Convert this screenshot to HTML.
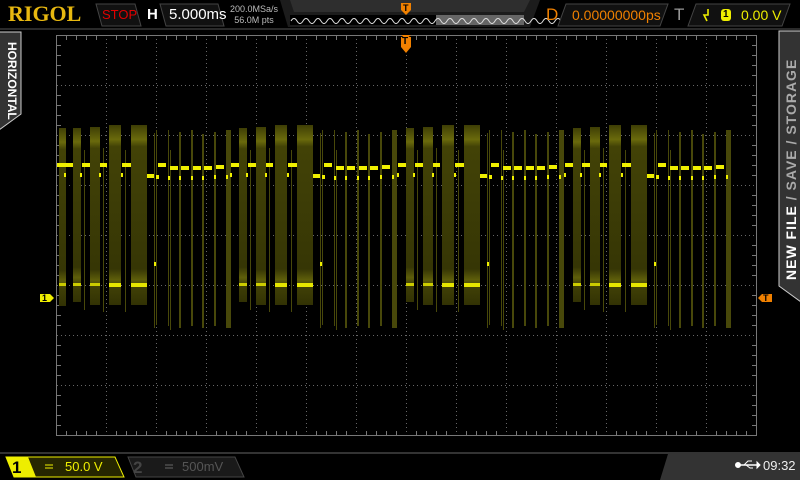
<!DOCTYPE html>
<html><head><meta charset="utf-8"><style>
body{margin:0;width:800px;height:480px;background:#000;overflow:hidden;font-family:"Liberation Sans",sans-serif;position:relative}
.a{position:absolute}
</style></head><body>
<svg class="a" style="left:0;top:0" width="800" height="480" viewBox="0 0 800 480">
<defs>
<linearGradient id="wb" x1="0" y1="0" x2="0" y2="1">
<stop offset="0" stop-color="#3e3e05"/><stop offset="0.08" stop-color="#6a6a0c"/><stop offset="0.12" stop-color="#424206"/><stop offset="0.8" stop-color="#363605"/><stop offset="0.86" stop-color="#5e5e0a"/><stop offset="0.9" stop-color="#404006"/><stop offset="1" stop-color="#323204"/></linearGradient>
<g id="seg">
<rect x="131" y="125" width="16" height="180" fill="url(#wb)"/>
<rect x="109" y="125" width="12" height="180" fill="url(#wb)"/>
<rect x="90" y="127" width="10" height="178" fill="url(#wb)"/>
<rect x="73" y="128" width="8" height="174" fill="url(#wb)"/>
<rect x="131" y="283" width="16" height="4" fill="#e6e600"/>
<rect x="109" y="283" width="12" height="4" fill="#e6e600"/>
<rect x="90" y="283" width="10" height="3" fill="#cccc00"/>
<rect x="73" y="283" width="8" height="3" fill="#cccc00"/>
<g fill="#48480a">
<rect x="84" y="150" width="1" height="160"/><rect x="103" y="148" width="1" height="164"/><rect x="125" y="150" width="1" height="162"/>
<rect x="154" y="133" width="1" height="195"/><rect x="156" y="130" width="1" height="195"/><rect x="168" y="130" width="1" height="196"/><rect x="170" y="150" width="1" height="180"/>
<rect x="179" y="132" width="2" height="196"/><rect x="191" y="130" width="2" height="196"/><rect x="202" y="134" width="2" height="194"/><rect x="214" y="132" width="2" height="194"/><rect x="226" y="130" width="5" height="198"/>
</g>
<g fill="#f0f000">
<rect x="65" y="163" width="8" height="4"/><rect x="82" y="163" width="8" height="4"/><rect x="100" y="163" width="7" height="4"/><rect x="122" y="163" width="9" height="4"/>
<rect x="64" y="173" width="2" height="4"/><rect x="80" y="173" width="2" height="4"/><rect x="99" y="173" width="2" height="4"/><rect x="121" y="173" width="2" height="4"/>
<rect x="147" y="174" width="7" height="4"/><rect x="156" y="175" width="3" height="4"/><rect x="168" y="176" width="2" height="4"/><rect x="179" y="176" width="2" height="4"/><rect x="191" y="176" width="2" height="4"/><rect x="202" y="176" width="2" height="4"/><rect x="214" y="175" width="2" height="4"/><rect x="226" y="175" width="2" height="4"/>
<rect x="158" y="163" width="8" height="4"/><rect x="170" y="166" width="8" height="4"/><rect x="181" y="166" width="8" height="4"/><rect x="193" y="166" width="8" height="4"/><rect x="204" y="166" width="8" height="4"/><rect x="216" y="165" width="8" height="4"/>
<rect x="154" y="262" width="2" height="4"/>
</g>
</g>
</defs>
<g fill="none" stroke="#666" stroke-width="1" stroke-dasharray="1 3">
<path d="M106.5 35V435M156.5 35V435M206.5 35V435M256.5 35V435M306.5 35V435M356.5 35V435M456.5 35V435M506.5 35V435M556.5 35V435M606.5 35V435M656.5 35V435M706.5 35V435"/>
<path d="M57 85.5H756M57 135.5H756M57 185.5H756M57 285.5H756M57 335.5H756M57 385.5H756"/>
<path d="M406.5 35V435M57 235.5H756"/>
</g>
<rect x="56.5" y="35.5" width="700" height="400" fill="none" stroke="#777"/>
<g stroke="#777">
<path d="M66.5 36v4M76.5 36v4M86.5 36v4M96.5 36v4M116.5 36v4M126.5 36v4M136.5 36v4M146.5 36v4M166.5 36v4M176.5 36v4M186.5 36v4M196.5 36v4M216.5 36v4M226.5 36v4M236.5 36v4M246.5 36v4M266.5 36v4M276.5 36v4M286.5 36v4M296.5 36v4M316.5 36v4M326.5 36v4M336.5 36v4M346.5 36v4M366.5 36v4M376.5 36v4M386.5 36v4M396.5 36v4M416.5 36v4M426.5 36v4M436.5 36v4M446.5 36v4M466.5 36v4M476.5 36v4M486.5 36v4M496.5 36v4M516.5 36v4M526.5 36v4M536.5 36v4M546.5 36v4M566.5 36v4M576.5 36v4M586.5 36v4M596.5 36v4M616.5 36v4M626.5 36v4M636.5 36v4M646.5 36v4M666.5 36v4M676.5 36v4M686.5 36v4M696.5 36v4M716.5 36v4M726.5 36v4M736.5 36v4M746.5 36v4"/>
<path d="M66.5 435v-4M76.5 435v-4M86.5 435v-4M96.5 435v-4M116.5 435v-4M126.5 435v-4M136.5 435v-4M146.5 435v-4M166.5 435v-4M176.5 435v-4M186.5 435v-4M196.5 435v-4M216.5 435v-4M226.5 435v-4M236.5 435v-4M246.5 435v-4M266.5 435v-4M276.5 435v-4M286.5 435v-4M296.5 435v-4M316.5 435v-4M326.5 435v-4M336.5 435v-4M346.5 435v-4M366.5 435v-4M376.5 435v-4M386.5 435v-4M396.5 435v-4M416.5 435v-4M426.5 435v-4M436.5 435v-4M446.5 435v-4M466.5 435v-4M476.5 435v-4M486.5 435v-4M496.5 435v-4M516.5 435v-4M526.5 435v-4M536.5 435v-4M546.5 435v-4M566.5 435v-4M576.5 435v-4M586.5 435v-4M596.5 435v-4M616.5 435v-4M626.5 435v-4M636.5 435v-4M646.5 435v-4M666.5 435v-4M676.5 435v-4M686.5 435v-4M696.5 435v-4M716.5 435v-4M726.5 435v-4M736.5 435v-4M746.5 435v-4"/>
<path d="M57 45.5h4M57 55.5h4M57 65.5h4M57 75.5h4M57 95.5h4M57 105.5h4M57 115.5h4M57 125.5h4M57 145.5h4M57 155.5h4M57 165.5h4M57 175.5h4M57 195.5h4M57 205.5h4M57 215.5h4M57 225.5h4M57 245.5h4M57 255.5h4M57 265.5h4M57 275.5h4M57 295.5h4M57 305.5h4M57 315.5h4M57 325.5h4M57 345.5h4M57 355.5h4M57 365.5h4M57 375.5h4M57 395.5h4M57 405.5h4M57 415.5h4M57 425.5h4"/>
<path d="M756 45.5h-4M756 55.5h-4M756 65.5h-4M756 75.5h-4M756 95.5h-4M756 105.5h-4M756 115.5h-4M756 125.5h-4M756 145.5h-4M756 155.5h-4M756 165.5h-4M756 175.5h-4M756 195.5h-4M756 205.5h-4M756 215.5h-4M756 225.5h-4M756 245.5h-4M756 255.5h-4M756 265.5h-4M756 275.5h-4M756 295.5h-4M756 305.5h-4M756 315.5h-4M756 325.5h-4M756 345.5h-4M756 355.5h-4M756 365.5h-4M756 375.5h-4M756 395.5h-4M756 405.5h-4M756 415.5h-4M756 425.5h-4"/>
</g>
<rect x="59" y="128" width="7" height="178" fill="url(#wb)"/>
<rect x="59" y="283" width="7" height="3" fill="#cccc00"/>
<rect x="57" y="163" width="8" height="4" fill="#f0f000"/>
<use href="#seg"/>
<use href="#seg" transform="translate(166,0)"/>
<use href="#seg" transform="translate(333,0)"/>
<use href="#seg" transform="translate(500,0)"/>
<rect x="0" y="28" width="800" height="2" fill="#2a2a2a"/>
<path d="M96 4H135L141 26H102Z" fill="#111" stroke="#444"/>
<path d="M160 4H218L224 26H166Z" fill="#111" stroke="#444"/>
<path d="M280 0H540L530 27H288Z" fill="#1c1c1c"/>
<path d="M290 0H530L524 12H294Z" fill="#2e2e2e"/>
<rect x="290" y="15" width="234" height="10" fill="#000"/>
<rect x="436" y="15" width="88" height="10" fill="#666"/>
<path d="M291 21q3-5 6 0t6 0 6 0 6 0 6 0 6 0 6 0 6 0 6 0 6 0 6 0 6 0 6 0 6 0 6 0 6 0 6 0 6 0 6 0 6 0 6 0 6 0 6 0 6 0 6 0 6 0 6 0 6 0 6 0 6 0 6 0 6 0 6 0 6 0 6 0 6 0 6 0 6 0 6 0 6 0 6 0 6 0 6 0 6 0 6 0 6 0 6 0 6 0 6 0 6 0 6 0 6 0 6 0 6 0 6 0 6 0 6 0 6 0 6 0 6 0" fill="none" stroke="#ddd" stroke-width="1"/>
<path d="M566 4H668L660 26H558Z" fill="#111" stroke="#444"/>
<path d="M696 4H790L782 26H688Z" fill="#111" stroke="#444"/>
<rect x="721" y="9" width="10" height="12" rx="3" fill="#ee0"/>
<path d="M708 9v6h-4l3 6" fill="none" stroke="#ee0" stroke-width="1.6"/>
<path d="M401 3h10v7l-5 5-5-5z" fill="#f08000"/>
<path d="M401 37h10v10l-5 6-5-6z" fill="#f08000"/>
<path d="M401 35h10l-5 4z" fill="#f08000"/>
<path d="M40 294h10l4 4-4 4h-10z" fill="#ee0"/>
<path d="M772 294h-10l-4 4 4 4h10z" fill="#f08000"/>
<path d="M-1 32H21V114L-1 130Z" fill="#333" stroke="#ccc"/>
<path d="M801 31H779V286L801 302Z" fill="#333" stroke="#ccc"/>
<rect x="0" y="452" width="800" height="2" fill="#333"/>
<path d="M668 454H800V480H660Z" fill="#333"/>
<path d="M6 457H115L124 477H14Z" fill="#262600" stroke="#ee0"/>
<path d="M6 457H28L36 477H14Z" fill="#ee0"/>
<path d="M128 457H235L244 477H136Z" fill="#1a1a1a" stroke="#444"/>
<path d="M45 465h8M45 468h8" stroke="#ee0"/>
<path d="M165 465h8M165 468h8" stroke="#666"/>
<g stroke="#fff" fill="#fff"><path d="M737 465h20" stroke-width="1.5"/><circle cx="738" cy="465" r="2.5"/><path d="M744 465l4-4h4M746 465l4 3h3" fill="none"/><path d="M757 462l3 3-3 3z"/></g>
</svg>
<div class="a" style="left:8px;top:1px;font:bold 22px 'Liberation Serif',serif;color:#e8b810">RIGOL</div>
<div class="a" style="left:102px;top:7px;font-size:13px;color:#e00000">STOP</div>
<div class="a" style="left:147px;top:6px;font:bold 15px 'Liberation Sans';color:#fff">H</div>
<div class="a" style="left:169px;top:6px;font-size:15px;color:#fff">5.000ms</div>
<div class="a" style="left:230px;top:4px;font-size:9px;color:#bbb;line-height:11px;text-align:center">200.0MSa/s<br>56.0M pts</div>
<div class="a" style="left:403px;top:3px;font:bold 9px 'Liberation Sans';color:#000">T</div>
<div class="a" style="left:402px;top:36px;font:bold 10px 'Liberation Sans';color:#000">T</div>
<div class="a" style="left:546px;top:5px;font-size:17px;color:#f08000">D</div>
<div class="a" style="left:572px;top:7px;font-size:14px;color:#f08000">0.00000000ps</div>
<div class="a" style="left:674px;top:5px;font-size:17px;color:#999">T</div>
<div class="a" style="left:723px;top:9px;font:bold 10px 'Liberation Sans';color:#000">1</div>
<div class="a" style="left:741px;top:7px;font-size:14px;color:#ee0">0.00 V</div>
<div class="a" style="left:42px;top:293px;font:bold 9px 'Liberation Sans';color:#000">1</div>
<div class="a" style="left:763px;top:293px;font:bold 9px 'Liberation Sans';color:#000">T</div>
<div class="a" style="left:3px;top:42px;transform-origin:0 0;transform:translate(16px,0) rotate(90deg);font:bold 12px 'Liberation Sans';color:#fff;white-space:nowrap">HORIZONTAL</div>
<div class="a" style="left:783px;top:280px;transform-origin:0 0;transform:rotate(-90deg);font:bold 14px 'Liberation Sans';color:#aaa;white-space:nowrap;letter-spacing:1px"><span style="color:#fff">NEW FILE</span> / SAVE / STORAGE</div>
<div class="a" style="left:12px;top:458px;font:bold 17px 'Liberation Sans';color:#000">1</div>
<div class="a" style="left:65px;top:459px;font-size:13px;color:#ee0">50.0 V</div>
<div class="a" style="left:133px;top:458px;font:bold 17px 'Liberation Sans';color:#444">2</div>
<div class="a" style="left:182px;top:459px;font-size:13px;color:#555">500mV</div>
<div class="a" style="left:763px;top:458px;font-size:13px;color:#eee">09:32</div>
</body></html>
